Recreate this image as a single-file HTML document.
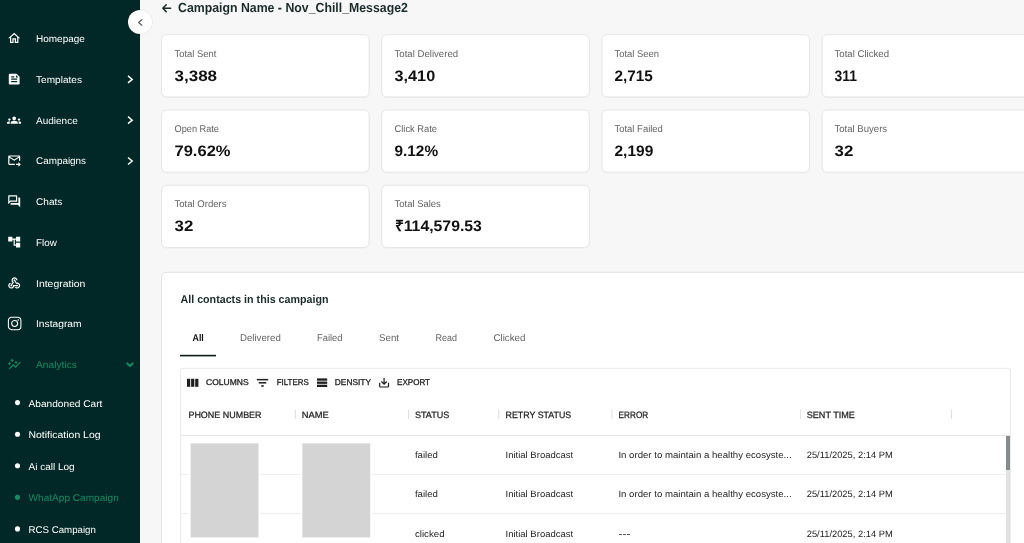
<!DOCTYPE html>
<html lang="en">
<head>
<meta charset="utf-8">
<title>Campaign Name - Nov_Chill_Message2</title>
<style>
html,body{margin:0;padding:0}
body{width:1024px;height:543px;overflow:hidden;position:relative;background:#f7f7f7;font-family:"Liberation Sans",sans-serif;}
.md{-webkit-text-stroke:.22px currentColor;}
#txt{position:absolute;left:0;top:0;width:1024px;height:543px;will-change:transform;}
#sb{position:absolute;left:0;top:0;width:140px;height:543px;background:#012827;}
.ic{position:absolute;width:14.4px;height:14.4px;fill:#fff;}
.ic.g{fill:#178c63;}
#col{position:absolute;left:128px;top:10.2px;width:24px;height:24px;border-radius:50%;background:#fff;box-shadow:0 0 0 0.6px rgba(0,0,0,.08);}
</style>
</head>
<body>
<div id="sb"></div>
<svg style="position:absolute;left:0;top:0" width="1024" height="543" viewBox="0 0 1024 543">
<rect x="161.50" y="35.40" width="207.6" height="62.2" rx="5" fill="none" stroke="#000" stroke-opacity=".035" stroke-width="1"/>
<rect x="161.50" y="34.70" width="207.6" height="62.2" rx="5" fill="#fff" stroke="#e3e3e3" stroke-width=".9"/>
<rect x="381.70" y="35.40" width="207.6" height="62.2" rx="5" fill="none" stroke="#000" stroke-opacity=".035" stroke-width="1"/>
<rect x="381.70" y="34.70" width="207.6" height="62.2" rx="5" fill="#fff" stroke="#e3e3e3" stroke-width=".9"/>
<rect x="601.90" y="35.40" width="207.6" height="62.2" rx="5" fill="none" stroke="#000" stroke-opacity=".035" stroke-width="1"/>
<rect x="601.90" y="34.70" width="207.6" height="62.2" rx="5" fill="#fff" stroke="#e3e3e3" stroke-width=".9"/>
<rect x="822.10" y="35.40" width="207.6" height="62.2" rx="5" fill="none" stroke="#000" stroke-opacity=".035" stroke-width="1"/>
<rect x="822.10" y="34.70" width="207.6" height="62.2" rx="5" fill="#fff" stroke="#e3e3e3" stroke-width=".9"/>
<rect x="161.50" y="110.70" width="207.6" height="62.2" rx="5" fill="none" stroke="#000" stroke-opacity=".035" stroke-width="1"/>
<rect x="161.50" y="110.00" width="207.6" height="62.2" rx="5" fill="#fff" stroke="#e3e3e3" stroke-width=".9"/>
<rect x="381.70" y="110.70" width="207.6" height="62.2" rx="5" fill="none" stroke="#000" stroke-opacity=".035" stroke-width="1"/>
<rect x="381.70" y="110.00" width="207.6" height="62.2" rx="5" fill="#fff" stroke="#e3e3e3" stroke-width=".9"/>
<rect x="601.90" y="110.70" width="207.6" height="62.2" rx="5" fill="none" stroke="#000" stroke-opacity=".035" stroke-width="1"/>
<rect x="601.90" y="110.00" width="207.6" height="62.2" rx="5" fill="#fff" stroke="#e3e3e3" stroke-width=".9"/>
<rect x="822.10" y="110.70" width="207.6" height="62.2" rx="5" fill="none" stroke="#000" stroke-opacity=".035" stroke-width="1"/>
<rect x="822.10" y="110.00" width="207.6" height="62.2" rx="5" fill="#fff" stroke="#e3e3e3" stroke-width=".9"/>
<rect x="161.50" y="186.00" width="207.6" height="62.2" rx="5" fill="none" stroke="#000" stroke-opacity=".035" stroke-width="1"/>
<rect x="161.50" y="185.30" width="207.6" height="62.2" rx="5" fill="#fff" stroke="#e3e3e3" stroke-width=".9"/>
<rect x="381.70" y="186.00" width="207.6" height="62.2" rx="5" fill="none" stroke="#000" stroke-opacity=".035" stroke-width="1"/>
<rect x="381.70" y="185.30" width="207.6" height="62.2" rx="5" fill="#fff" stroke="#e3e3e3" stroke-width=".9"/>
<rect x="161.5" y="272.3" width="900" height="300" rx="5" fill="#fff" stroke="#e0e0e0" stroke-width=".9"/>
<rect x="180" y="354.800" width="36" height="1.600" fill="#0c1a1a"/>
<rect x="180.6" y="368.4" width="829.8" height="200" rx="2.5" fill="#fff" stroke="#e6e6e6" stroke-width=".9"/>
<rect x="181" y="435.05" width="829" height=".9" fill="#e2e2e2"/>
<rect x="181" y="473.95" width="825" height=".9" fill="#ebebeb"/>
<rect x="181" y="513.15" width="825" height=".9" fill="#ebebeb"/>
<rect x="294.85" y="409.5" width=".9" height="9.5" fill="#d9d9d9"/>
<rect x="408.25" y="409.5" width=".9" height="9.5" fill="#d9d9d9"/>
<rect x="498.35" y="409.5" width=".9" height="9.5" fill="#d9d9d9"/>
<rect x="611.45" y="409.5" width=".9" height="9.5" fill="#d9d9d9"/>
<rect x="800.25" y="409.5" width=".9" height="9.5" fill="#d9d9d9"/>
<rect x="951.15" y="409.5" width=".9" height="9.5" fill="#d9d9d9"/>
<rect x="1006" y="436" width="4" height="110" fill="#e2e2e2"/>
<rect x="1006" y="436" width="4" height="34" fill="#888b8d"/>
<rect x="188.6" y="441.4" width="71.900" height="98" fill="#fff"/>
<rect x="190.6" y="443.4" width="67.900" height="94" fill="#d4d4d4"/>
<rect x="300.3" y="441.4" width="71.900" height="98" fill="#fff"/>
<rect x="302.3" y="443.4" width="67.900" height="94" fill="#d4d4d4"/>
</svg>
<!-- sidebar icons -->
<svg class="ic" style="left:6.900px;top:31.1px" viewBox="0 0 24 24"><path d="M12 5.69l5 4.5V18h-2v-6H9v6H7v-7.81l5-4.5M12 3L2 12h3v8h6v-6h2v6h6v-8h3L12 3z"/></svg>
<svg class="ic" style="left:6.900px;top:71.9px" viewBox="0 0 24 24"><path d="M16 3H5c-1.100 0-2 .9-2 2v14c0 1.100.9 2 2 2h14c1.100 0 2-.9 2-2V8l-5-5zM7 7h5v2H7V7zm10 10H7v-2h10v2zm0-4H7v-2h10v2zm-2-4V5l4 4h-4z"/></svg>
<svg class="ic" style="left:6.900px;top:112.6px" viewBox="0 0 24 24"><path d="M12 12.750c1.630 0 3.070.39 4.240.9 1.080.48 1.760 1.560 1.760 2.730V18H6v-1.610c0-1.180.68-2.260 1.760-2.730 1.170-.52 2.610-.91 4.240-.91zM4 13c1.100 0 2-.9 2-2s-.9-2-2-2-2 .9-2 2 .9 2 2 2zm1.130 1.100c-.37-.06-.74-.1-1.130-.1-.99 0-1.930.21-2.780.58C.48 14.900 0 15.620 0 16.430V18h4.500v-1.610c0-.83.23-1.610.63-2.290zM20 13c1.100 0 2-.9 2-2s-.9-2-2-2-2 .9-2 2 .9 2 2 2zm4 3.430c0-.81-.48-1.530-1.220-1.850-.85-.37-1.790-.58-2.780-.58-.39 0-.76.04-1.130.1.400.68.630 1.460.630 2.290V18H24v-1.570zM12 6c1.660 0 3 1.340 3 3s-1.340 3-3 3-3-1.340-3-3 1.340-3 3-3z"/></svg>
<svg class="ic" style="left:6.900px;top:153.4px" viewBox="0 0 24 24"><path d="M20 4H4c-1.100 0-2 .9-2 2v12c0 1.100.9 2 2 2h9v-2H4V8l8 5 8-5v5h2V6c0-1.100-.9-2-2-2zm-8 7L4 6h16l-8 5zm7 4l4 4-4 4v-3h-4v-2h4v-3z"/></svg>
<svg class="ic" style="left:6.900px;top:194.2px" viewBox="0 0 24 24"><path d="M15 4v7H5.170l-.59.59-.58.58V4h11m1-2H3c-.55 0-1 .45-1 1v14l4-4h10c.55 0 1-.45 1-1V3c0-.55-.45-1-1-1zm5 4h-2v9H6v2c0 .55.45 1 1 1h11l4 4V7c0-.55-.45-1-1-1z"/></svg>
<svg class="ic" style="left:6.900px;top:234.9px" viewBox="0 0 24 24"><path d="M22 11V3h-7v3H9V3H2v8h7V8h2v10h4v3h7v-8h-7v3h-2V8h2v3z"/></svg>
<svg class="ic" style="left:6.900px;top:275.7px" viewBox="0 0 24 24"><path d="M10 15h5.880c.27-.31.67-.5 1.120-.5.830 0 1.500.67 1.500 1.500s-.67 1.500-1.500 1.500c-.44 0-.84-.19-1.120-.5H11.900c-.46 2.280-2.480 4-4.900 4-2.760 0-5-2.240-5-5 0-2.420 1.720-4.440 4-4.900v2.070C4.840 13.580 4 14.700 4 16c0 1.650 1.350 3 3 3s3-1.350 3-3v-1zm2.500-11c1.650 0 3 1.350 3 3h2c0-2.760-2.240-5-5-5s-5 2.240-5 5c0 1.430.6 2.710 1.550 3.620l-2.350 3.900c-.68.140-1.200.75-1.200 1.480 0 .83.67 1.500 1.500 1.500s1.500-.67 1.500-1.500c0-.16-.02-.31-.07-.45l3.380-5.630C10.490 9.610 9.500 8.420 9.500 7c0-1.650 1.350-3 3-3zm4.500 9c-.64 0-1.230.2-1.720.54l-3.050-5.070C11.530 8.350 11 7.740 11 7c0-.83.67-1.500 1.500-1.500S14 6.170 14 7c0 .15-.02.29-.06.430l2.190 3.650c.28-.05.570-.08.870-.08 2.760 0 5 2.240 5 5s-2.240 5-5 5c-1.850 0-3.470-1.010-4.330-2.500h2.670c.48.320 1.050.5 1.660.5 1.650 0 3-1.350 3-3s-1.350-3-3-3z"/></svg>
<svg style="position:absolute;left:7px;top:316px;width:15.500px;height:15.500px" viewBox="0 0 15.500 15.500"><rect x="1.400" y="1.200" width="12.500" height="12.500" rx="3.300" fill="none" stroke="#fff" stroke-width="1.050"/><circle cx="7.650" cy="7.450" r="2.950" fill="none" stroke="#fff" stroke-width="1.050"/><circle cx="11.200" cy="3.900" r=".75" fill="#fff"/></svg>
<svg class="ic g" style="left:6.900px;top:356.7px" viewBox="0 0 24 24"><path d="M14.060 9.940 12 9l2.060-.94L15 6l.94 2.060L18 9l-2.060.94L15 12l-.94-2.060zM4 14l.94-2.060L7 11l-2.060-.94L4 8l-.94 2.060L1 11l2.060.94L4 14zm4.500-5 1.090-2.410L12 5.500 9.590 4.410 8.500 2 7.410 4.410 5 5.500l2.410 1.090L8.500 9zm-4 11.500 6-6.010 4 4L23 8.930l-1.410-1.410-7.090 7.970-4-4L3 19l1.500 1.500z"/></svg>
<!-- chevrons -->
<svg style="position:absolute;left:120px;top:60px" width="20" height="320" viewBox="120 60 20 320" fill="none" stroke-linejoin="miter">
<path d="M128 75.900L132.200 79.400L128 82.900" stroke="#fff" stroke-width="1.450"/>
<path d="M128 116.670L132.200 120.170L128 123.670" stroke="#fff" stroke-width="1.450"/>
<path d="M128 157.440L132.200 160.940L128 164.440" stroke="#fff" stroke-width="1.450"/>
<path d="M126.700 363L130 366L133.300 363" stroke="#178c63" stroke-width="2"/>
</svg>
<!-- bullets -->
<svg style="position:absolute;left:0;top:390px" width="40" height="153" viewBox="0 390 40 153"><circle cx="17.500" cy="402.60" r="2.550" fill="#fff"/><circle cx="17.500" cy="434.18" r="2.550" fill="#fff"/><circle cx="17.500" cy="465.76" r="2.550" fill="#fff"/><circle cx="17.500" cy="497.34" r="2.550" fill="#178c63"/><circle cx="17.500" cy="528.92" r="2.550" fill="#fff"/></svg>
<!-- collapse -->
<div id="col"><svg style="position:absolute;left:0;top:0;width:24px;height:24px" viewBox="0 0 24 24"><path d="M13.900 9.700L10.600 12.450L13.900 15.200" fill="none" stroke="#5a5a5a" stroke-width="1.150" stroke-linecap="round" stroke-linejoin="round"/></svg></div>
<!-- back arrow -->
<svg style="position:absolute;left:160px;top:0;width:14px;height:16px" viewBox="0 0 14 16"><path d="M10.600 8.200H2.900M6.200 4.800L2.800 8.200L6.200 11.600" fill="none" stroke="#1b2b2a" stroke-width="1.500" stroke-linecap="round" stroke-linejoin="round"/></svg>
<!-- toolbar icons -->
<svg style="position:absolute;left:180px;top:372px" width="220" height="20" viewBox="180 372 220 20" fill="#1f1f1f">
<rect x="187" y="378.800" width="3.200" height="8"/><rect x="191.100" y="378.800" width="3.200" height="8"/><rect x="195.200" y="378.800" width="3.200" height="8"/>
<rect x="256.800" y="378.900" width="11.400" height="1.500"/><rect x="258.700" y="382.050" width="7.600" height="1.500"/><rect x="261.200" y="385.200" width="2.600" height="1.500"/>
<rect x="317" y="378.400" width="10.200" height="2.300"/><rect x="317" y="381.550" width="10.200" height="2.300"/><rect x="317" y="384.700" width="10.200" height="2.300"/>
<path d="M379.700 382.700v3.500c0 .45.350.8.800.8h7.200c.45 0 .8-.35.8-.8v-3.500M384.100 378.100v5.900M381.400 381.500l2.700 2.700 2.700-2.700" fill="none" stroke="#1f1f1f" stroke-width="1.200"/>
</svg>
<svg id="txt" width="1024" height="543" viewBox="0 0 1024 543" font-family="Liberation Sans, sans-serif">
<text transform="matrix(1.0222,0,.001,1,36.00,42)" font-size="9.8" fill="#ffffff">Homepage</text>
<text transform="matrix(1.0301,0,.001,1,36.00,83)" font-size="9.8" fill="#ffffff">Templates</text>
<text transform="matrix(1.0230,0,.001,1,36.00,124)" font-size="9.8" fill="#ffffff">Audience</text>
<text transform="matrix(1.0108,0,.001,1,36.00,164)" font-size="9.8" fill="#ffffff">Campaigns</text>
<text transform="matrix(1.0276,0,.001,1,36.00,205)" font-size="9.8" fill="#ffffff">Chats</text>
<text transform="matrix(1.0054,0,.001,1,36.00,246)" font-size="9.8" fill="#ffffff">Flow</text>
<text transform="matrix(1.0670,0,.001,1,36.00,287)" font-size="9.8" fill="#ffffff">Integration</text>
<text transform="matrix(1.0468,0,.001,1,36.00,327)" font-size="9.8" fill="#ffffff">Instagram</text>
<text transform="matrix(1.0458,0,.001,1,36.00,368)" font-size="9.8" fill="#178c63">Analytics</text>
<text transform="matrix(1.0370,0,.001,1,28.50,407)" font-size="9.8" fill="#ffffff">Abandoned Cart</text>
<text transform="matrix(1.0677,0,.001,1,28.50,438)" font-size="9.8" fill="#ffffff">Notification Log</text>
<text transform="matrix(1.0198,0,.001,1,28.50,470)" font-size="9.8" fill="#ffffff">Ai call Log</text>
<text transform="matrix(1.0309,0,.001,1,28.50,501)" font-size="9.8" fill="#178c63">WhatApp Campaign</text>
<text transform="matrix(0.9903,0,.001,1,28.50,533)" font-size="9.8" fill="#ffffff">RCS Campaign</text>
<text transform="matrix(0.9407,0,.001,1,178.00,12)" font-size="13.1" font-weight="700" fill="#1b2b2a">Campaign Name - Nov_Chill_Message2</text>
<text transform="matrix(0.9638,0,.001,1,174.50,57)" font-size="9.8" fill="#636363">Total Sent</text>
<text transform="matrix(1.1206,0,.001,1,174.50,81)" font-size="15.2" font-weight="700" fill="#111111">3,388</text>
<text transform="matrix(0.9828,0,.001,1,394.50,57)" font-size="9.8" fill="#636363">Total Delivered</text>
<text transform="matrix(1.0706,0,.001,1,394.50,81)" font-size="15.2" font-weight="700" fill="#111111">3,410</text>
<text transform="matrix(0.9612,0,.001,1,614.50,57)" font-size="9.8" fill="#636363">Total Seen</text>
<text transform="matrix(1.0075,0,.001,1,614.50,81)" font-size="15.2" font-weight="700" fill="#111111">2,715</text>
<text transform="matrix(0.9830,0,.001,1,834.50,57)" font-size="9.8" fill="#636363">Total Clicked</text>
<text transform="matrix(0.9178,0,.001,1,834.50,81)" font-size="15.2" font-weight="700" fill="#111111">311</text>
<text transform="matrix(0.9390,0,.001,1,174.50,132)" font-size="9.8" fill="#636363">Open Rate</text>
<text transform="matrix(1.0870,0,.001,1,174.50,156)" font-size="15.2" font-weight="700" fill="#111111">79.62%</text>
<text transform="matrix(0.9540,0,.001,1,394.50,132)" font-size="9.8" fill="#636363">Click Rate</text>
<text transform="matrix(1.0121,0,.001,1,394.50,156)" font-size="15.2" font-weight="700" fill="#111111">9.12%</text>
<text transform="matrix(0.9659,0,.001,1,614.50,132)" font-size="9.8" fill="#636363">Total Failed</text>
<text transform="matrix(1.0206,0,.001,1,614.50,156)" font-size="15.2" font-weight="700" fill="#111111">2,199</text>
<text transform="matrix(0.9773,0,.001,1,834.50,132)" font-size="9.8" fill="#636363">Total Buyers</text>
<text transform="matrix(1.1120,0,.001,1,834.50,156)" font-size="15.2" font-weight="700" fill="#111111">32</text>
<text transform="matrix(0.9764,0,.001,1,174.50,207)" font-size="9.8" fill="#636363">Total Orders</text>
<text transform="matrix(1.1120,0,.001,1,174.50,231)" font-size="15.2" font-weight="700" fill="#111111">32</text>
<text transform="matrix(0.9679,0,.001,1,394.50,207)" font-size="9.8" fill="#636363">Total Sales</text>
<text transform="matrix(1.0405,0,.001,1,394.50,231)" font-size="15.2" font-weight="700" fill="#111111">₹114,579.53</text>
<text transform="matrix(0.9468,0,.001,1,180.50,303)" font-size="11.3" font-weight="700" fill="#1b2b2a">All contacts in this campaign</text>
<text transform="matrix(0.9017,0,.001,1,192.50,341)" font-size="9.8" font-weight="700" fill="#111">All</text>
<text transform="matrix(0.9857,0,.001,1,240.00,341)" font-size="9.8" fill="#636363">Delivered</text>
<text transform="matrix(0.9555,0,.001,1,317.00,341)" font-size="9.8" fill="#636363">Failed</text>
<text transform="matrix(0.9922,0,.001,1,379.00,341)" font-size="9.8" fill="#636363">Sent</text>
<text transform="matrix(0.9179,0,.001,1,435.50,341)" font-size="9.8" fill="#636363">Read</text>
<text transform="matrix(0.9961,0,.001,1,493.50,341)" font-size="9.8" fill="#636363">Clicked</text>
<text transform="matrix(1.0145,0,.001,1,206.00,385)" font-size="8.4" fill="#1f1f1f" stroke="#1f1f1f" stroke-width="0.3">COLUMNS</text>
<text transform="matrix(0.9460,0,.001,1,276.70,385)" font-size="8.4" fill="#1f1f1f" stroke="#1f1f1f" stroke-width="0.3">FILTERS</text>
<text transform="matrix(0.9969,0,.001,1,334.80,385)" font-size="8.4" fill="#1f1f1f" stroke="#1f1f1f" stroke-width="0.3">DENSITY</text>
<text transform="matrix(0.9622,0,.001,1,397.00,385)" font-size="8.4" fill="#1f1f1f" stroke="#1f1f1f" stroke-width="0.3">EXPORT</text>
<text transform="matrix(0.9741,0,.001,1,188.40,418)" font-size="9.2" fill="#1f1f1f" stroke="#1f1f1f" stroke-width="0.25">PHONE NUMBER</text>
<text transform="matrix(1.0171,0,.001,1,301.80,418)" font-size="9.2" fill="#1f1f1f" stroke="#1f1f1f" stroke-width="0.25">NAME</text>
<text transform="matrix(0.9859,0,.001,1,414.90,418)" font-size="9.2" fill="#1f1f1f" stroke="#1f1f1f" stroke-width="0.25">STATUS</text>
<text transform="matrix(0.9641,0,.001,1,505.50,418)" font-size="9.2" fill="#1f1f1f" stroke="#1f1f1f" stroke-width="0.25">RETRY STATUS</text>
<text transform="matrix(0.8919,0,.001,1,618.60,418)" font-size="9.2" fill="#1f1f1f" stroke="#1f1f1f" stroke-width="0.25">ERROR</text>
<text transform="matrix(0.9903,0,.001,1,806.70,418)" font-size="9.2" fill="#1f1f1f" stroke="#1f1f1f" stroke-width="0.25">SENT TIME</text>
<text transform="matrix(1.0469,0,.001,1,414.90,458)" font-size="9.2" fill="#222">failed</text>
<text transform="matrix(1.0356,0,.001,1,505.50,458)" font-size="9.2" fill="#222">Initial Broadcast</text>
<text transform="matrix(1.0467,0,.001,1,618.40,458)" font-size="9.2" fill="#222">In order to maintain a healthy ecosyste...</text>
<text transform="matrix(1.0162,0,.001,1,806.70,458)" font-size="9.2" fill="#222">25/11/2025, 2:14 PM</text>
<text transform="matrix(1.0469,0,.001,1,414.90,497)" font-size="9.2" fill="#222">failed</text>
<text transform="matrix(1.0356,0,.001,1,505.50,497)" font-size="9.2" fill="#222">Initial Broadcast</text>
<text transform="matrix(1.0467,0,.001,1,618.40,497)" font-size="9.2" fill="#222">In order to maintain a healthy ecosyste...</text>
<text transform="matrix(1.0162,0,.001,1,806.70,497)" font-size="9.2" fill="#222">25/11/2025, 2:14 PM</text>
<text transform="matrix(1.0607,0,.001,1,414.90,537)" font-size="9.2" fill="#222">clicked</text>
<text transform="matrix(1.0356,0,.001,1,505.50,537)" font-size="9.2" fill="#222">Initial Broadcast</text>
<text transform="matrix(1.3061,0,.001,1,618.40,537)" font-size="9.2" fill="#222">---</text>
<text transform="matrix(1.0162,0,.001,1,806.70,537)" font-size="9.2" fill="#222">25/11/2025, 2:14 PM</text>
</svg>
</body>
</html>
